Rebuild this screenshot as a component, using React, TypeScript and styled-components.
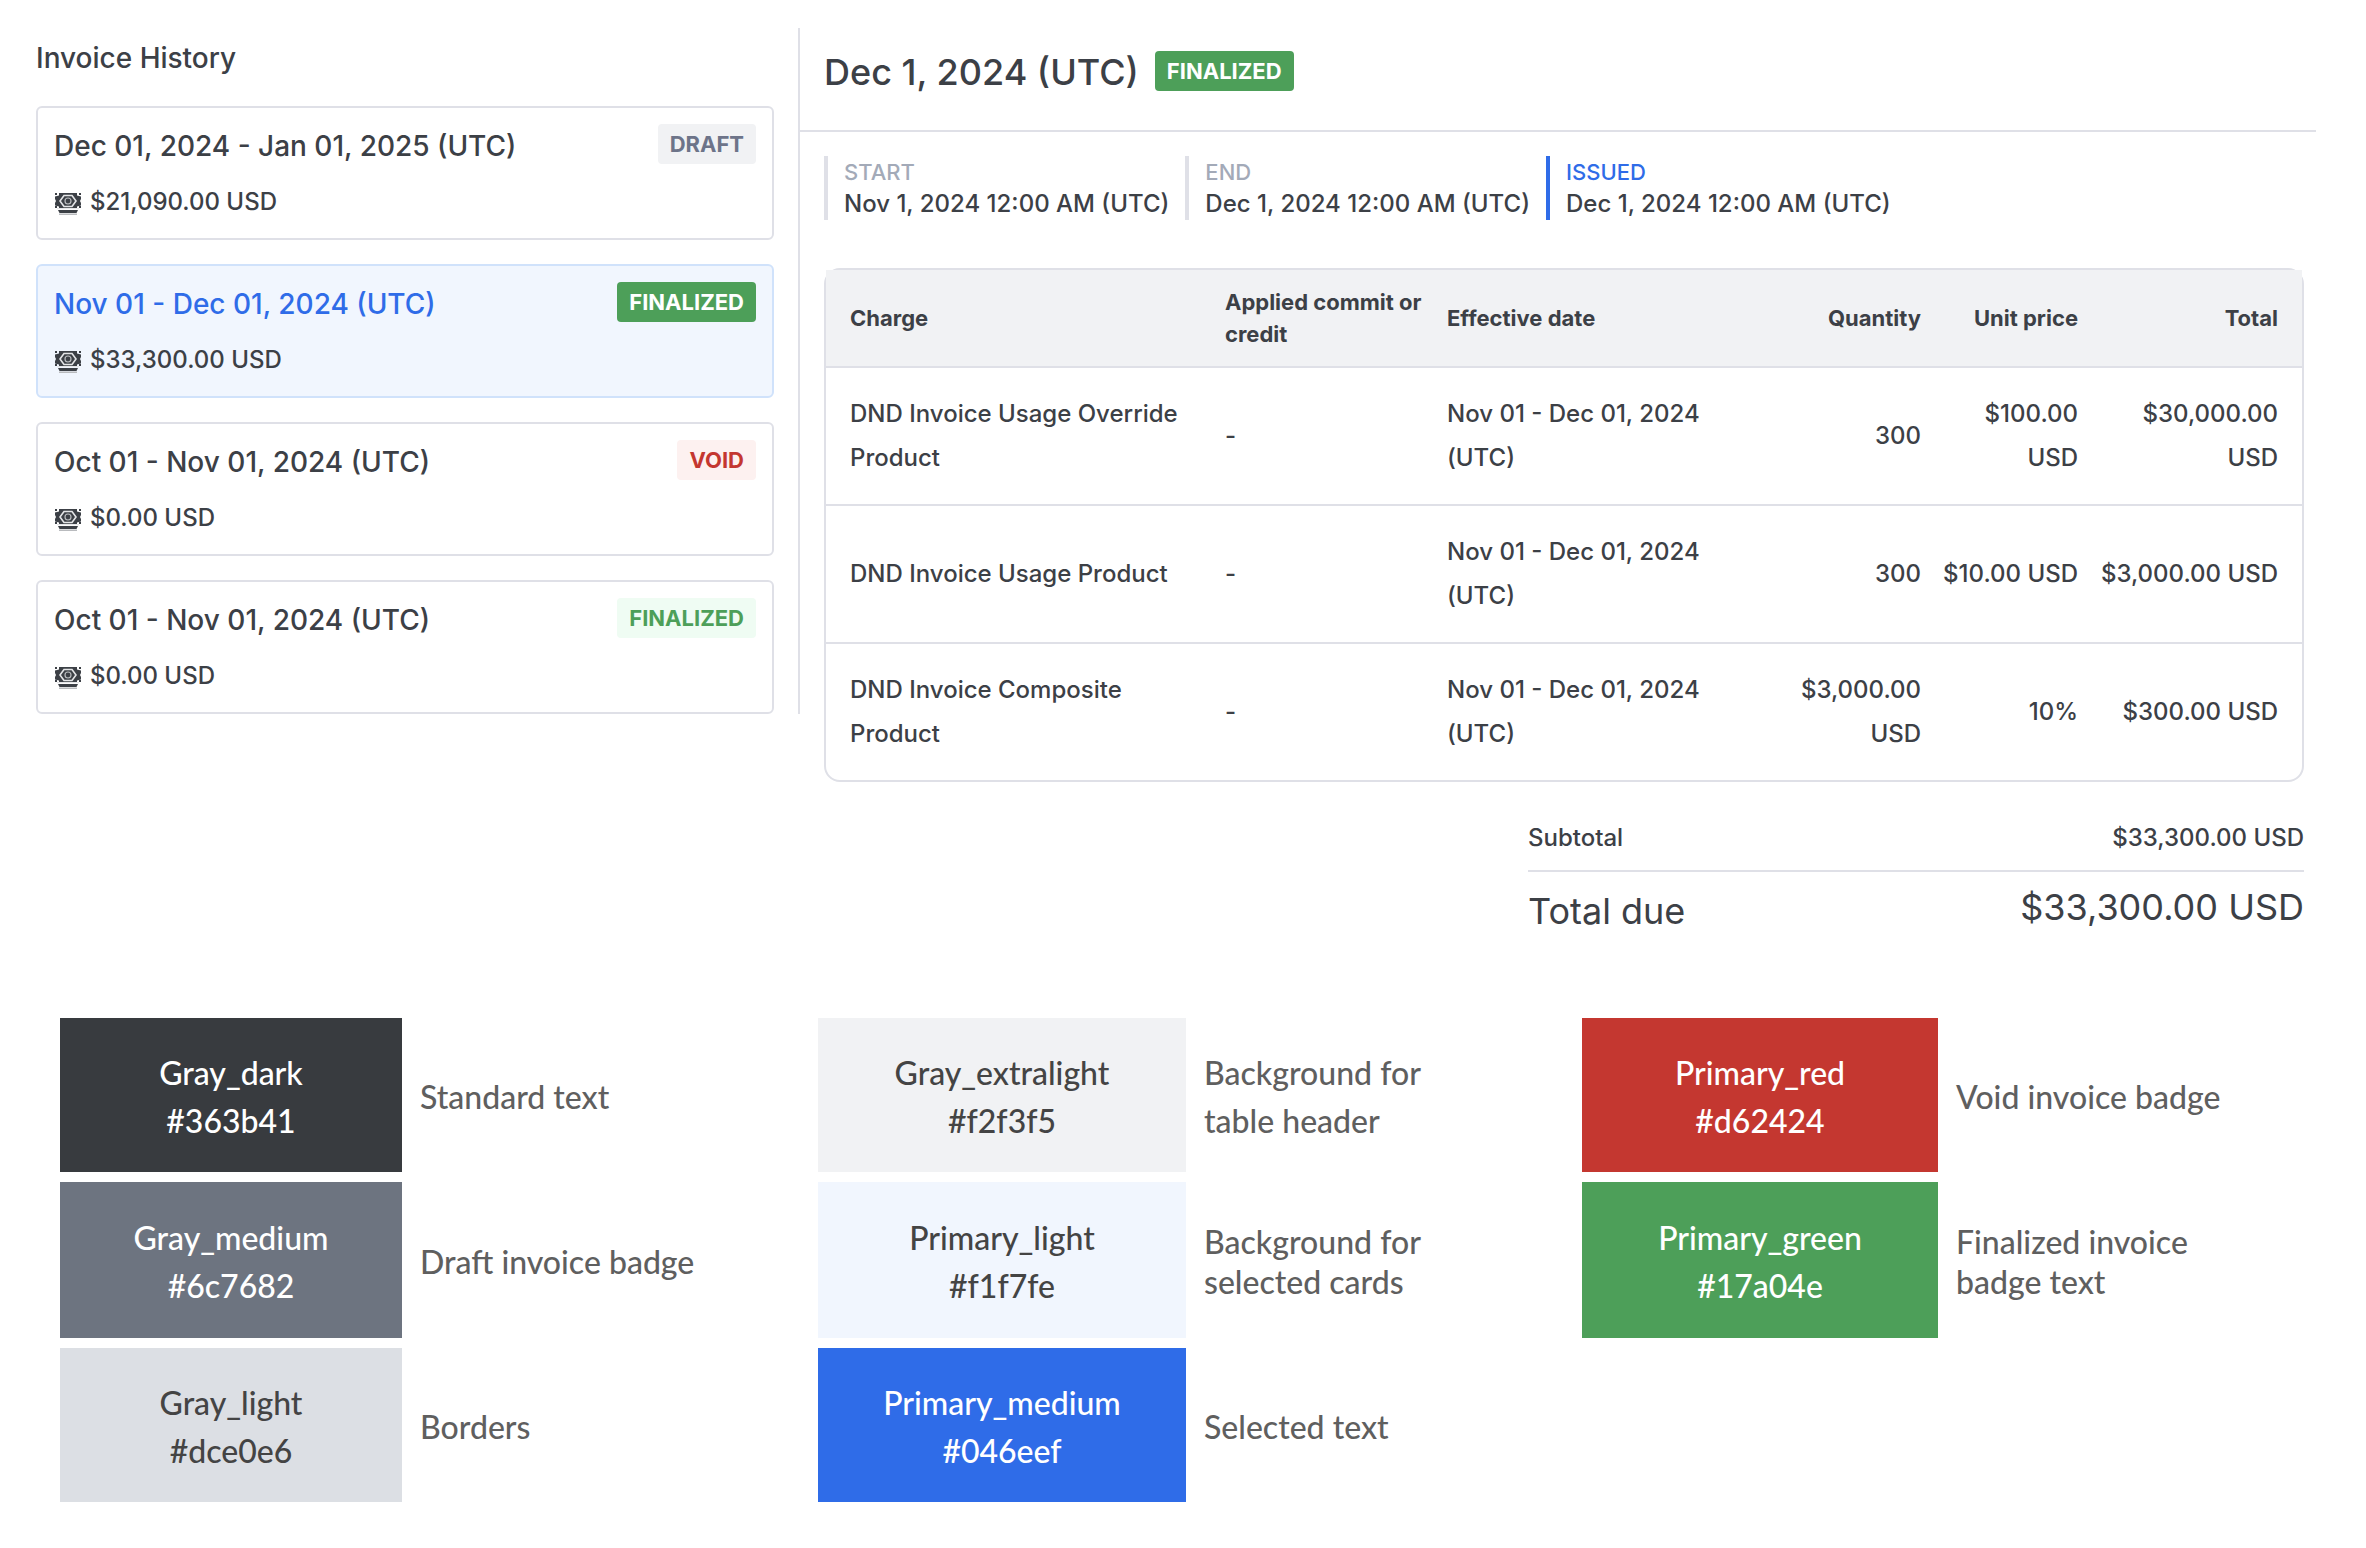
import React from "react";
import styled, { createGlobalStyle } from "styled-components";

const color = {
  text: "#3c4046",
  grayDark: "#383b3f",
  grayMedium: "#6d7480",
  grayLight: "#dcdfe4",
  grayExtralight: "#f1f2f4",
  border: "#dfe0e7",
  muted: "#a3aab8",
  primaryLight: "#f1f6fe",
  primaryMedium: "#2f6ce8",
  selectedBorder: "#d0e2fb",
  red: "#c43730",
  green: "#4d9f59",
};

const GlobalStyle = createGlobalStyle`
  *, *::before, *::after { box-sizing: border-box; }
  body {
    margin: 0;
    background: #fff;
    color: ${color.text};
    font: 500 24px/32px Inter, "Liberation Sans", sans-serif;
  }
  h1, h2, p, dl, dd, ul { margin: 0; padding: 0; }
  ul { list-style: none; }
`;

const Page = styled.main`
  padding: 28px 50px 46px 36px;
`;

const Invoices = styled.section`
  display: flex;
  align-items: flex-start;
`;

const History = styled.aside`
  flex: 0 0 764px;
  padding-right: 24px;
  border-right: 2px solid ${color.border};
`;

const HistoryTitle = styled.h2`
  padding: 10px 0 28px;
  font-size: 28px;
  line-height: 40px;
  font-weight: 500;
`;

const CardList = styled.ul`
  display: grid;
  gap: 24px;
`;

const Card = styled.button<{ $selected?: boolean }>`
  display: block;
  width: 100%;
  padding: 16px;
  text-align: left;
  font: inherit;
  color: inherit;
  cursor: pointer;
  border: 2px solid ${(p) => (p.$selected ? color.selectedBorder : color.border)};
  border-radius: 6px;
  background: ${(p) => (p.$selected ? color.primaryLight : "#fff")};
`;

const CardHead = styled.span`
  display: flex;
  justify-content: space-between;
  align-items: flex-start;
`;

const CardTitle = styled.span<{ $selected?: boolean }>`
  font-size: 28px;
  line-height: 44px;
  color: ${(p) => (p.$selected ? color.primaryMedium : color.text)};
`;

const Amount = styled.span`
  display: flex;
  align-items: center;
  gap: 8px;
  padding: 18px 0 4px;
`;

type Tone = "draft" | "solid" | "void" | "finalized";

const tones: Record<Tone, [string, string]> = {
  draft: [color.grayExtralight, "#6d7489"],
  solid: [color.green, "#fff"],
  void: ["#fdf1f0", color.red],
  finalized: ["#effcf3", color.green],
};

const Badge = styled.span<{ $tone: Tone }>`
  padding: 4px 12px;
  border-radius: 4px;
  font-size: 22px;
  line-height: 32px;
  font-weight: 700;
  background: ${(p) => tones[p.$tone][0]};
  color: ${(p) => tones[p.$tone][1]};
`;

const Detail = styled.article`
  flex: 1;
  min-width: 0;
`;

const DetailHead = styled.header`
  display: flex;
  align-items: center;
  gap: 16px;
  padding: 20px 24px 36px;
  border-bottom: 2px solid ${color.border};
`;

const DetailTitle = styled.h1`
  padding-top: 2px;
  font-size: 36px;
  line-height: 44px;
  font-weight: 500;
`;

const DetailBody = styled.div`
  padding: 24px 12px 0 24px;
`;

const Dates = styled.dl`
  display: flex;
  gap: 16px;
`;

const DateItem = styled.div<{ $active?: boolean }>`
  padding: 0 0 0 16px;
  border-left: 4px solid ${(p) => (p.$active ? color.primaryMedium : color.border)};

  dt {
    font-size: 22px;
    line-height: 32px;
    color: ${(p) => (p.$active ? color.primaryMedium : color.muted)};
  }
`;

const TableFrame = styled.div`
  margin-top: 48px;
  border: 2px solid ${color.border};
  border-radius: 16px;
`;

const Table = styled.table`
  width: 100%;
  table-layout: fixed;
  border-collapse: collapse;
  line-height: 44px;
`;

const Col = styled.col<{ $width?: number }>`
  width: ${(p) => (p.$width ? `${p.$width}px` : "auto")};
`;

const HeadCell = styled.th<{ $end?: boolean }>`
  padding: 16px 8px;
  background: ${color.grayExtralight};
  border-bottom: 2px solid ${color.border};
  font-size: 22px;
  line-height: 32px;
  font-weight: 700;
  text-align: ${(p) => (p.$end ? "right" : "left")};

  &:first-child { padding-left: 24px; }
  &:last-child { padding-right: 24px; }
`;

const Cell = styled.td<{ $end?: boolean }>`
  padding: 24px 8px;
  text-align: ${(p) => (p.$end ? "right" : "left")};

  &:first-child { padding-left: 24px; }
  &:last-child { padding-right: 24px; }
  tr:not(:last-child) > & { border-bottom: 2px solid ${color.border}; }
`;

const Totals = styled.dl`
  width: 776px;
  margin: 40px 0 0 auto;
`;

const Subtotal = styled.div`
  display: flex;
  justify-content: space-between;
  padding-bottom: 16px;
  border-bottom: 2px solid ${color.border};
`;

const TotalDue = styled.div`
  display: flex;
  justify-content: space-between;
  padding-top: 13px;
  font-size: 36px;
  line-height: 44px;
  font-weight: 400;

  dt { padding-top: 4px; }
`;

const Palette = styled.section`
  display: grid;
  grid-template-columns: 758fr 764fr 734fr;
  margin: 85px 0 0 24px;
  font: 500 32px/48px Lato, "Open Sans", sans-serif;
`;

const PaletteColumn = styled.ul`
  display: grid;
  grid-template-rows: 154px 156px 154px;
  gap: 10px;
`;

const Swatch = styled.li`
  display: flex;
  align-items: center;
  gap: 18px;
`;

const Chip = styled.div<{ $bg: string; $light?: boolean; $width: number }>`
  flex: 0 0 ${(p) => p.$width}px;
  align-self: stretch;
  display: flex;
  flex-direction: column;
  align-items: center;
  justify-content: center;
  padding-top: 4px;
  background: ${(p) => p.$bg};
  color: ${(p) => (p.$light ? "#fff" : "#444")};
`;

const Usage = styled.p<{ $tight?: boolean }>`
  max-width: 280px;
  padding-top: 4px;
  line-height: ${(p) => (p.$tight ? 40 : 48)}px;
  color: #5f5f5f;
`;

const CashIcon = () => (
  <svg width="28" height="28" viewBox="0 0 28 28" fill="none" aria-hidden="true">
    <path
      fill="#3c4046"
      d="M5 5h18v2.500l4 1v2.500l-1 2 1 2v2.500l-4 1V21H5v-2.500l-4-1V15l1-2-1-2V8.500l4-1z"
    />
    <path stroke="#3c4046" strokeWidth="2" strokeDasharray="2 1.500" d="M2 5v3M2 18v3M26 5v3M26 18v3" />
    <path stroke="#e4e5e7" strokeWidth="1.600" d="M10 7.500h8l4 5.500-4 5.500h-8L6 13z" />
    <circle cx="14" cy="13" r="3" stroke="#b9bbbe" strokeWidth="1.200" />
    <path stroke="#e4e5e7" strokeWidth="1.200" d="M3 20.600h22" />
    <path fill="#3c4046" d="M4 22h20l-1.500 3h-17z" />
    <path fill="#b9bbbe" d="M5 25.500h18V27H5z" />
  </svg>
);

type Invoice = { period: string; amount: string; label: string; tone: Tone; selected?: boolean };

const invoices: Invoice[] = [
  { period: "Dec 01, 2024 - Jan 01, 2025 (UTC)", amount: "$21,090.00 USD", label: "DRAFT", tone: "draft" },
  { period: "Nov 01 - Dec 01, 2024 (UTC)", amount: "$33,300.00 USD", label: "FINALIZED", tone: "solid", selected: true },
  { period: "Oct 01 - Nov 01, 2024 (UTC)", amount: "$0.00 USD", label: "VOID", tone: "void" },
  { period: "Oct 01 - Nov 01, 2024 (UTC)", amount: "$0.00 USD", label: "FINALIZED", tone: "finalized" },
];

const dates = [
  { label: "START", value: "Nov 1, 2024 12:00 AM (UTC)" },
  { label: "END", value: "Dec 1, 2024 12:00 AM (UTC)" },
  { label: "ISSUED", value: "Dec 1, 2024 12:00 AM (UTC)", active: true },
];

const columns = [
  { label: "Charge" },
  { label: "Applied commit or credit", width: 222 },
  { label: "Effective date", width: 310 },
  { label: "Quantity", width: 180, end: true },
  { label: "Unit price", width: 157, end: true },
  { label: "Total", width: 216, end: true },
];

const rows = [
  ["DND Invoice Usage Override Product", "-", "Nov 01 - Dec 01, 2024 (UTC)", "300", "$100.00 USD", "$30,000.00 USD"],
  ["DND Invoice Usage Product", "-", "Nov 01 - Dec 01, 2024 (UTC)", "300", "$10.00 USD", "$3,000.00 USD"],
  ["DND Invoice Composite Product", "-", "Nov 01 - Dec 01, 2024 (UTC)", "$3,000.00 USD", "10%", "$300.00 USD"],
];

type SwatchData = { name: string; hex: string; bg: string; light?: boolean; usage: string; tight?: boolean };

const palette: { width: number; swatches: SwatchData[] }[] = [
  {
    width: 342,
    swatches: [
      { name: "Gray_dark", hex: "#363b41", bg: color.grayDark, light: true, usage: "Standard text" },
      { name: "Gray_medium", hex: "#6c7682", bg: color.grayMedium, light: true, usage: "Draft invoice badge" },
      { name: "Gray_light", hex: "#dce0e6", bg: color.grayLight, usage: "Borders" },
    ],
  },
  {
    width: 368,
    swatches: [
      { name: "Gray_extralight", hex: "#f2f3f5", bg: color.grayExtralight, usage: "Background for table header" },
      { name: "Primary_light", hex: "#f1f7fe", bg: color.primaryLight, usage: "Background for selected cards", tight: true },
      { name: "Primary_medium", hex: "#046eef", bg: color.primaryMedium, light: true, usage: "Selected text" },
    ],
  },
  {
    width: 356,
    swatches: [
      { name: "Primary_red", hex: "#d62424", bg: color.red, light: true, usage: "Void invoice badge" },
      { name: "Primary_green", hex: "#17a04e", bg: color.green, light: true, usage: "Finalized invoice badge text", tight: true },
    ],
  },
];

export default function App() {
  return (
    <Page>
      <GlobalStyle />
      <Invoices>
        <History>
          <HistoryTitle>Invoice History</HistoryTitle>
          <CardList>
            {invoices.map((inv, i) => (
              <li key={i}>
                <Card type="button" $selected={inv.selected} aria-pressed={!!inv.selected}>
                  <CardHead>
                    <CardTitle $selected={inv.selected}>{inv.period}</CardTitle>
                    <Badge $tone={inv.tone}>{inv.label}</Badge>
                  </CardHead>
                  <Amount>
                    <CashIcon />
                    {inv.amount}
                  </Amount>
                </Card>
              </li>
            ))}
          </CardList>
        </History>

        <Detail>
          <DetailHead>
            <DetailTitle>Dec 1, 2024 (UTC)</DetailTitle>
            <Badge $tone="solid">FINALIZED</Badge>
          </DetailHead>
          <DetailBody>
            <Dates>
              {dates.map((d) => (
                <DateItem key={d.label} $active={d.active}>
                  <dt>{d.label}</dt>
                  <dd>{d.value}</dd>
                </DateItem>
              ))}
            </Dates>
            <TableFrame>
              <Table>
                <colgroup>
                  {columns.map((c) => (
                    <Col key={c.label} $width={c.width} />
                  ))}
                </colgroup>
                <thead>
                  <tr>
                    {columns.map((c) => (
                      <HeadCell key={c.label} scope="col" $end={c.end}>
                        {c.label}
                      </HeadCell>
                    ))}
                  </tr>
                </thead>
                <tbody>
                  {rows.map((row) => (
                    <tr key={row[0]}>
                      {row.map((value, i) => (
                        <Cell key={i} $end={columns[i].end}>
                          {value}
                        </Cell>
                      ))}
                    </tr>
                  ))}
                </tbody>
              </Table>
            </TableFrame>
            <Totals>
              <Subtotal>
                <dt>Subtotal</dt>
                <dd>$33,300.00 USD</dd>
              </Subtotal>
              <TotalDue>
                <dt>Total due</dt>
                <dd>$33,300.00 USD</dd>
              </TotalDue>
            </Totals>
          </DetailBody>
        </Detail>
      </Invoices>

      <Palette>
        {palette.map((group) => (
          <PaletteColumn key={group.width}>
            {group.swatches.map((s) => (
              <Swatch key={s.name}>
                <Chip $bg={s.bg} $light={s.light} $width={group.width}>
                  <span>{s.name}</span>
                  <span>{s.hex}</span>
                </Chip>
                <Usage $tight={s.tight}>{s.usage}</Usage>
              </Swatch>
            ))}
          </PaletteColumn>
        ))}
      </Palette>
    </Page>
  );
}
